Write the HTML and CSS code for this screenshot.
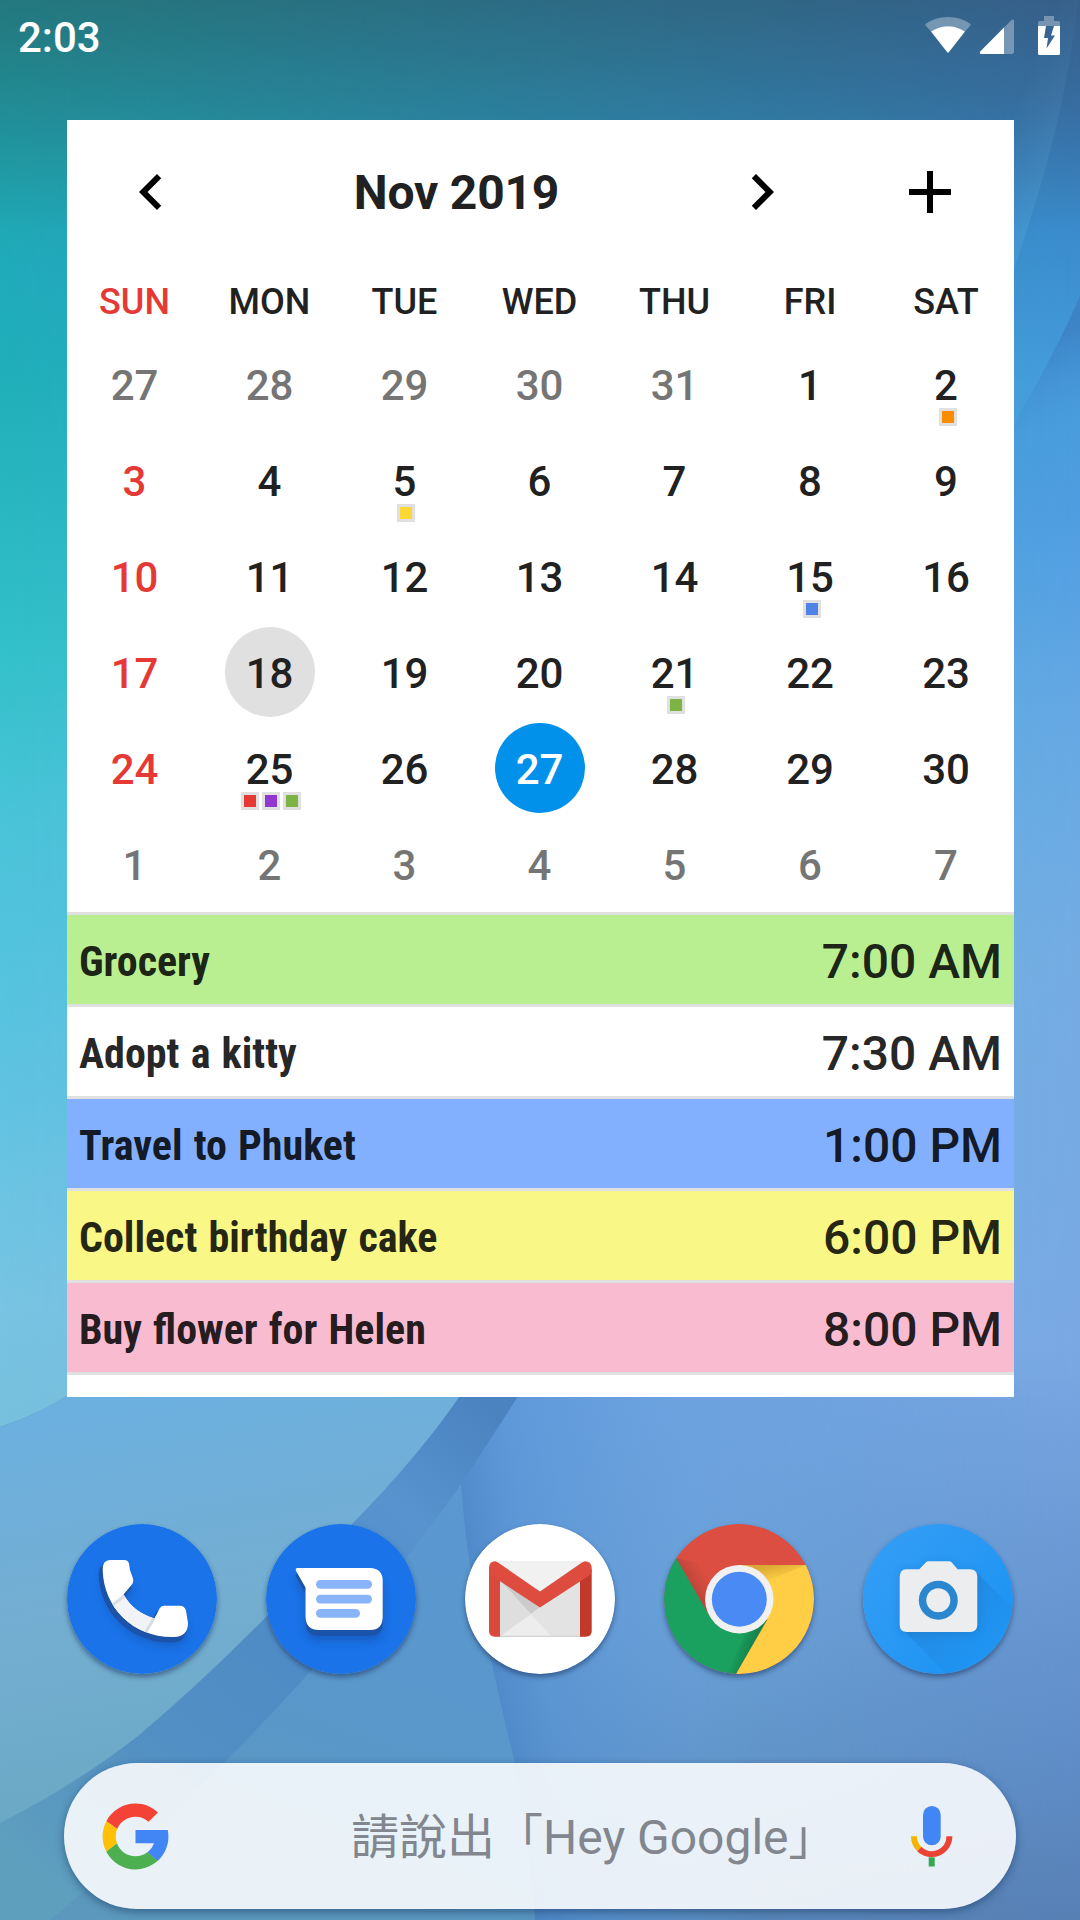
FILE: index.html
```html
<!DOCTYPE html>
<html lang="zh-Hant">
<head>
<meta charset="utf-8">
<title>Home screen</title>
<link rel="stylesheet" href="styles.css">
</head>
<body>
<div class="phone">
  <svg class="wallpaper" viewBox="0 0 1080 1920" preserveAspectRatio="none" aria-hidden="true">
    <defs>
      <linearGradient id="left" x1="0" y1="0" x2="0" y2="1">
        <stop offset="0" stop-color="#1f9a9c"/>
        <stop offset=".07" stop-color="#1fa2aa"/>
        <stop offset=".14" stop-color="#20abba"/>
        <stop offset=".2" stop-color="#21b0ba"/>
        <stop offset=".34" stop-color="#33c1ca"/>
        <stop offset=".43" stop-color="#4ac4d8"/>
        <stop offset=".53" stop-color="#58c3e0"/>
        <stop offset=".68" stop-color="#78c4e3"/>
        <stop offset=".75" stop-color="#76c0dc"/>
        <stop offset="1" stop-color="#5b9bc0"/>
      </linearGradient>
      <linearGradient id="right" x1="0" y1="0" x2="0" y2="1">
        <stop offset="0" stop-color="#3c73ae"/>
        <stop offset=".06" stop-color="#3a7ab8"/>
        <stop offset=".12" stop-color="#3a8bcb"/>
        <stop offset=".2" stop-color="#469cdb"/>
        <stop offset=".27" stop-color="#509de1"/>
        <stop offset=".37" stop-color="#65a8e4"/>
        <stop offset=".5" stop-color="#74ace2"/>
        <stop offset=".7" stop-color="#7aa8e3"/>
        <stop offset=".8" stop-color="#6c9ad5"/>
        <stop offset=".92" stop-color="#5f8cc6"/>
        <stop offset="1" stop-color="#5780b5"/>
      </linearGradient>
      <linearGradient id="fade" x1="0" y1="0" x2="1" y2="0">
        <stop offset="0" stop-color="#000"/>
        <stop offset="1" stop-color="#fff"/>
      </linearGradient>
      <mask id="across"><rect width="1080" height="1920" fill="url(#fade)"/></mask>
      <linearGradient id="base" gradientUnits="userSpaceOnUse" x1="700" y1="1390" x2="760" y2="1920">
        <stop offset="0" stop-color="#6ca3e0"/>
        <stop offset=".4" stop-color="#6ba1d8"/>
        <stop offset=".7" stop-color="#6297ca"/>
        <stop offset="1" stop-color="#5989ba"/>
      </linearGradient>
      <linearGradient id="baseEdge" gradientUnits="userSpaceOnUse" x1="700" y1="0" x2="1080" y2="0">
        <stop offset="0" stop-color="#fff" stop-opacity="0"/>
        <stop offset="1" stop-color="#fff"/>
      </linearGradient>
      <mask id="edgeMask" maskUnits="userSpaceOnUse" x="0" y="0" width="1080" height="1920"><rect x="700" y="1380" width="380" height="540" fill="url(#baseEdge)"/></mask>
      <linearGradient id="spine" gradientUnits="userSpaceOnUse" x1="455" y1="1500" x2="700" y2="1460">
        <stop offset="0" stop-color="#4580c2" stop-opacity=".75"/>
        <stop offset=".25" stop-color="#4f8dd2" stop-opacity=".5"/>
        <stop offset="1" stop-color="#5b97da" stop-opacity="0"/>
      </linearGradient>
      <linearGradient id="petal" gradientUnits="userSpaceOnUse" x1="120" y1="1397" x2="190" y2="1790">
        <stop offset="0" stop-color="#6cb0e0"/>
        <stop offset=".5" stop-color="#74aed2"/>
        <stop offset="1" stop-color="#6ba9c6"/>
      </linearGradient>
      <linearGradient id="fold" gradientUnits="userSpaceOnUse" x1="480" y1="1400" x2="60" y2="1900">
        <stop offset="0" stop-color="#4a83bf"/>
        <stop offset=".2" stop-color="#5893cf"/>
        <stop offset=".5" stop-color="#4f8cc5"/>
        <stop offset=".72" stop-color="#528fc3"/>
        <stop offset="1" stop-color="#5f9fbe"/>
      </linearGradient>
      <linearGradient id="inner" gradientUnits="userSpaceOnUse" x1="460" y1="1490" x2="300" y2="1920">
        <stop offset="0" stop-color="#5b97d2"/>
        <stop offset=".6" stop-color="#5997c9"/>
        <stop offset="1" stop-color="#5c98bd"/>
      </linearGradient>
      <linearGradient id="ridge" gradientUnits="userSpaceOnUse" x1="1035" y1="345" x2="1075" y2="430">
        <stop offset="0" stop-color="#3a78bb" stop-opacity=".6"/>
        <stop offset="1" stop-color="#4a93d8" stop-opacity="0"/>
      </linearGradient>
      <linearGradient id="glow" gradientUnits="userSpaceOnUse" x1="990" y1="180" x2="1046" y2="200">
        <stop offset="0" stop-color="#7cc0ee" stop-opacity="0"/>
        <stop offset="1" stop-color="#7cc0ee" stop-opacity=".18"/>
      </linearGradient>
      <linearGradient id="shade" x1="0" y1="0" x2="0" y2="1">
        <stop offset="0" stop-color="#2b3b48" stop-opacity=".36"/>
        <stop offset="1" stop-color="#2b3b48" stop-opacity="0"/>
      </linearGradient>
    </defs>
    <rect width="1080" height="1920" fill="url(#left)"/>
    <rect width="1080" height="1920" fill="url(#right)" mask="url(#across)"/>
    <path d="M990 0H1078Q1066 120 1014 268L980 400Z" fill="url(#glow)"/>
    <path d="M1080 296Q1050 365 1000 447V520H1080Z" fill="url(#ridge)"/>
    <path d="M440 1390H1020V1920H440Z" fill="url(#base)"/>
    <path d="M1014 1397H1080V1920H1014Z" fill="url(#base)"/>
    <rect width="1080" height="1920" fill="url(#right)" mask="url(#edgeMask)"/>
    <path d="M452 1390H760V1920H530Q500 1700 470 1570Q456 1480 452 1390Z" fill="url(#spine)"/>
    <path d="M0 1427Q45 1412 75 1390H522Q490 1440 461 1484Q466 1545 470 1565Q480 1625 492 1665Q504 1720 515 1763Q530 1840 535 1920H0Z" fill="url(#fold)"/>
    <path d="M461 1484Q466 1545 470 1565Q480 1625 492 1665Q504 1720 515 1763Q530 1840 535 1920H50Q170 1820 224 1763Q330 1655 405 1560Q440 1515 461 1484Z" fill="url(#inner)"/>
    <path d="M0 1427Q45 1412 75 1390H464Q420 1455 353 1523Q310 1575 266 1617Q200 1684 138 1736Q75 1785 0 1823Z" fill="url(#petal)"/>
    <rect width="1080" height="230" fill="url(#shade)"/>
  </svg>

  <header class="status">
    <span class="clock">2:03</span>
    <svg class="status-icons" width="136" height="40" viewBox="0 0 136 40" aria-hidden="true">
      <path d="M.4 8Q10 1 23 1T45.600 8Q46 9 45 10L40 15.500Q23 5 6 15.500L1 10Q0 9 .4 8Z" fill="#fff" opacity=".32"/>
      <path d="M6 15.500Q23 5 40 15.500L24 36Q23 37.400 22 36Z" fill="#fff"/>
      <path d="M78.500 12L86.500 4Q88.700 2.800 89 5V36.500L87.500 38H78.500Z" fill="#fff" opacity=".32"/>
      <path d="M79 11.500V38H55.500Q54 37 55.200 35.500Z" fill="#fff"/>
      <path d="M113 10V6.500Q113 5 114.500 5H119V0H129V5H133.500Q135 5 135 6.500V10Z" fill="#fff" opacity=".32"/>
      <path d="M113 10H121L119 22H123L121.500 32.500 130 19.500H126L129 10H135V37.500Q135 39 133.500 39H114.500Q113 39 113 37.500Z" fill="#fff"/>
    </svg>
  </header>

  <main class="widget">
    <div class="toolbar">
      <span class="tool tool-prev"><svg width="72" height="72" viewBox="0 0 24 24"><path d="M15.410 7.410 14 6l-6 6 6 6 1.410-1.410L10.830 12z"/></svg></span>
      <h1 class="month">Nov 2019</h1>
      <span class="tool"><svg width="72" height="72" viewBox="0 0 24 24"><path d="M10 6 8.590 7.410 13.170 12l-4.580 4.590L10 18l6-6z"/></svg></span>
      <span class="tool"><svg width="72" height="72" viewBox="0 0 24 24"><path d="M19 13h-6v6h-2v-6H5v-2h6V5h2v6h6v2z"/></svg></span>
    </div>
    <div class="weekdays">
      <span class="sun">SUN</span><span>MON</span><span>TUE</span><span>WED</span><span>THU</span><span>FRI</span><span>SAT</span>
    </div>
    <div class="days">
      <div class="day other">27</div><div class="day other">28</div><div class="day other">29</div><div class="day other">30</div><div class="day other">31</div><div class="day">1</div><div class="day">2<div class="dots"><i class="dot orange"></i></div></div>
      <div class="day sun">3</div><div class="day">4</div><div class="day">5<div class="dots"><i class="dot yellow"></i></div></div><div class="day">6</div><div class="day">7</div><div class="day">8</div><div class="day">9</div>
      <div class="day sun">10</div><div class="day">11</div><div class="day">12</div><div class="day">13</div><div class="day">14</div><div class="day">15<div class="dots"><i class="dot blue"></i></div></div><div class="day">16</div>
      <div class="day sun">17</div><div class="day"><span class="disc picked">18</span></div><div class="day">19</div><div class="day">20</div><div class="day">21<div class="dots"><i class="dot green"></i></div></div><div class="day">22</div><div class="day">23</div>
      <div class="day sun">24</div><div class="day">25<div class="dots"><i class="dot red"></i><i class="dot purple"></i><i class="dot green"></i></div></div><div class="day">26</div><div class="day"><span class="disc today">27</span></div><div class="day">28</div><div class="day">29</div><div class="day">30</div>
      <div class="day other">1</div><div class="day other">2</div><div class="day other">3</div><div class="day other">4</div><div class="day other">5</div><div class="day other">6</div><div class="day other">7</div>
    </div>
    <ul class="events">
      <li class="event lime"><span class="name">Grocery</span><span class="time">7:00 AM</span></li>
      <li class="event"><span class="name">Adopt a kitty</span><span class="time">7:30 AM</span></li>
      <li class="event sky"><span class="name">Travel to Phuket</span><span class="time">1:00 PM</span></li>
      <li class="event lemon"><span class="name">Collect birthday cake</span><span class="time">6:00 PM</span></li>
      <li class="event pink"><span class="name">Buy flower for Helen</span><span class="time">8:00 PM</span></li>
    </ul>
  </main>

  <nav class="dock">
    <svg class="app" viewBox="0 0 150 150" role="img" aria-label="Phone">
      <defs>
        <path id="handset" d="M43 36H57.500Q61 36 62 39.500L63 46 66 54.500Q67 58 64.500 61L56.500 70.500C64 83 73 90 87.500 94.500L92.500 84.500Q94 81.700 97 81.700H113Q117.500 81.700 119 86.500L121 99Q121 112.500 107 113C67 114 36.500 84 35.700 46Q35.500 36 43 36Z"/>
        <clipPath id="handsetClip"><use href="#handset"/></clipPath>
        <filter id="soft" x="-30%" y="-30%" width="160%" height="160%"><feGaussianBlur stdDeviation="4"/></filter>
      </defs>
      <circle cx="75" cy="75" r="75" fill="#1a73e8"/>
      <use href="#handset" x="-1" y="9" fill="#174ea6" opacity=".5" filter="url(#soft)"/>
      <use href="#handset" x="-4" y="4.500" fill="#1b53a8"/>
      <use href="#handset" x="-2" y="5.500" fill="#1b53a8"/>
      <use href="#handset" fill="#fff"/>
      <g clip-path="url(#handsetClip)">
        <path d="M44 81.500 57.500 71 90 92 78 110H60Z" fill="#f1f3f6"/>
        <path d="M44 82 58 71.500M78.500 108.500 87.500 93.500" stroke="#dadce3" stroke-width="3"/>
      </g>
    </svg>
    <svg class="app" viewBox="0 0 150 150" role="img" aria-label="Messages">
      <defs><path id="bubble" d="M31 44H104Q116.700 44.500 116.700 57V93Q116.500 106 104 106H53Q40 106 39.500 93V63.500L29.800 46.500Q29.300 44.300 31 44Z"/></defs>
      <circle cx="75" cy="75" r="75" fill="#1a73e8"/>
      <use href="#bubble" y="10" fill="#174ea6" opacity=".6" filter="url(#soft)"/>
      <use href="#bubble" y="5.800" fill="#1b53a8"/>
      <use href="#bubble" fill="#fff"/>
      <g fill="#8ab4f8"><rect x="50" y="56" width="56" height="8.700" rx="4.350"/><rect x="50" y="70.700" width="56" height="8.700" rx="4.350"/><rect x="50" y="85" width="44" height="8.700" rx="4.350"/></g>
    </svg>
    <svg class="app" viewBox="0 0 150 150" role="img" aria-label="Gmail">
      <circle cx="75" cy="75" r="75" fill="#fff"/>
      <path d="M30 37.300H120V112.700H30Z" fill="#e2e2e2"/>
      <path d="M30 37.300H120L75 68Z" fill="#f1f1f1"/>
      <path d="M35 56 66 90 35 112.700Z" fill="#dedede"/>
      <path d="M35 56 75 83 66 90Z" fill="#cbcbcb"/>
      <path d="M66 90 35 112.700H87Z" fill="#ededed"/>
      <path d="M115 56 75 83 66 90 87 112.700H115Z" fill="#e3e3e3"/>
      <path d="M35 111.700H115V113H35Z" fill="#d2d2d2"/>
      <path d="M24 45V107Q24 112.700 30 112.700H35V50Z" fill="#d9493d"/>
      <path d="M126.700 45V107Q126.700 112.700 121 112.700H115V50Z" fill="#c0392b"/>
      <path d="M24 43.500Q24.500 37.300 30 37.300L33 38.500 75 67.500 117 38.500 120 37.300Q126 37.300 126.700 43.500V48Q126.500 50 125 51L75 83.500 25.500 51Q24 50 24 48Z" fill="#de4c3f"/>
    </svg>
    <svg class="app" viewBox="0 0 150 150" role="img" aria-label="Chrome">
      <defs>
        <clipPath id="round"><circle cx="75" cy="75" r="75"/></clipPath>
        <linearGradient id="redFold" gradientUnits="userSpaceOnUse" x1="26" y1="66" x2="44" y2="55"><stop offset="0" stop-color="#6d2a25" stop-opacity=".3"/><stop offset="1" stop-color="#6d2a25" stop-opacity="0"/></linearGradient>
        <linearGradient id="yellowFold" gradientUnits="userSpaceOnUse" x1="110" y1="40" x2="114" y2="56"><stop offset="0" stop-color="#8a5a10" stop-opacity=".32"/><stop offset="1" stop-color="#8a5a10" stop-opacity="0"/></linearGradient>
        <linearGradient id="greenFold" gradientUnits="userSpaceOnUse" x1="90" y1="122" x2="74" y2="116"><stop offset="0" stop-color="#0c4b2c" stop-opacity=".38"/><stop offset="1" stop-color="#0c4b2c" stop-opacity="0"/></linearGradient>
      </defs>
      <g clip-path="url(#round)">
        <rect width="150" height="150" fill="#db4e41"/>
        <path d="M12.300 34.300 45 91 75 96 102.700 96.700 72 150H0V30Z" fill="#1aa15f"/>
        <path d="M75 41H150V150H72L102.700 96Z" fill="#ffce44"/>
        <path d="M12.300 34.300 45 91 60 44Z" fill="url(#redFold)"/>
        <path d="M75 41H142L96 60Z" fill="url(#yellowFold)"/>
        <path d="M104 95 72 150 62 150 84 104Z" fill="url(#greenFold)"/>
      </g>
      <circle cx="75.300" cy="75.200" r="34.200" fill="#f1f1f1"/>
      <circle cx="75.300" cy="75.200" r="27.500" fill="#4a8af4"/>
    </svg>
    <svg class="app" viewBox="0 0 150 150" role="img" aria-label="Camera">
      <defs>
        <linearGradient id="cam" x1=".1" y1=".1" x2=".8" y2=".7"><stop offset="0" stop-color="#339df5"/><stop offset="1" stop-color="#2095f3"/></linearGradient>
        <linearGradient id="camShade" gradientUnits="userSpaceOnUse" x1="70" y1="70" x2="125" y2="125"><stop offset="0" stop-color="#1565b5" stop-opacity=".28"/><stop offset="1" stop-color="#1565b5" stop-opacity=".02"/></linearGradient>
        <path id="camera" d="M43 45.300H56.300L63 38.300Q64 37.300 65.500 37.300H86Q87.500 37.300 88.500 38.300L94.700 45.300H107Q114.300 45.500 114.300 52.500V101Q114 108 107 108H43.500Q36.700 107.700 36.700 101V52.500Q37 45.500 43 45.300Z"/>
      </defs>
      <circle cx="75" cy="75" r="75" fill="url(#cam)"/>
      <path d="M112 47 150 84V150H83L40 106Z" fill="url(#camShade)" clip-path="url(#round)"/>
      <use href="#camera" y="1.500" fill="#14589c" opacity=".28" filter="url(#soft)"/>
      <use href="#camera" fill="#ecedef"/>
      <circle cx="75.300" cy="76.300" r="19.500" fill="#2b86d0"/>
      <circle cx="75.300" cy="76.300" r="12" fill="#ecedef"/>
    </svg>
  </nav>

  <div class="search">
    <svg width="79" height="79" viewBox="0 0 48 48" role="img" aria-label="Google">
      <path fill="#4285f4" d="M43.611 20.083H24v8h11.303a12.040 12.040 0 0 1-4.087 5.571l6.190 5.238C36.971 39.205 44 34 44 24c0-1.341-.138-2.650-.389-3.917z"/>
      <path fill="#f44336" d="m6.306 14.691 6.571 4.819C14.655 15.108 18.961 12 24 12c3.059 0 5.842 1.154 7.961 3.039l5.657-5.657C34.046 6.053 29.268 4 24 4 16.318 4 9.656 8.337 6.306 14.691z"/>
      <path fill="#4caf50" d="M24 44c5.166 0 9.860-1.977 13.409-5.192l-6.190-5.238A11.910 11.910 0 0 1 24 36c-5.202 0-9.619-3.317-11.283-7.946l-6.522 5.025C9.505 39.556 16.227 44 24 44z"/>
      <path fill="#ffc107" d="M6.306 14.691A19.900 19.900 0 0 0 4 24c0 3.260.790 6.340 2.195 9.079l6.522-5.025A11.900 11.900 0 0 1 12.877 19.510z"/>
    </svg>
    <span class="hint">請說出「Hey Google」</span>
    <svg class="mic" width="42" height="61" viewBox="0 0 42 61" role="img" aria-label="Voice search">
      <rect x="12" width="17.700" height="39.300" rx="8.850" fill="#4285f4"/>
      <g fill="none" stroke-width="6"><path d="M3 30.300A17.700 17.700 0 0 0 8.300 43" stroke="#f4b400"/><path d="M8.300 43A17.700 17.700 0 0 0 38.400 30.300" stroke="#ea4335"/></g>
      <path d="M17.700 51.300H23.700V60.500H17.700Z" fill="#34a853"/>
    </svg>
  </div>
</div>
</body>
</html>
```
FILE: styles.css
```css
* {
  box-sizing: border-box;
}

body {
  margin: 0;
  font-family: Roboto, "Noto Sans CJK TC", sans-serif;
  color: #212121;
}

.phone {
  position: relative;
  display: flex;
  flex-direction: column;
  width: 1080px;
  height: 1920px;
  overflow: hidden;
}

.wallpaper {
  position: absolute;
  inset: 0;
  z-index: -1;
  width: 1080px;
  height: 1920px;
}

.status {
  display: flex;
  justify-content: space-between;
  align-items: flex-start;
  height: 120px;
  padding: 16px 19px 0 18px;
  color: #fff;
}

.clock {
  font-size: 42px;
  font-weight: 500;
  line-height: 44px;
}

.widget {
  display: flex;
  flex-direction: column;
  width: 947px;
  height: 1277px;
  margin-left: 67px;
  background: #fff;
}

.toolbar {
  display: flex;
  align-items: center;
  height: 144px;
}

.tool {
  display: flex;
  justify-content: center;
  width: 168px;
}

.month {
  flex: 1;
  margin: 0;
  padding-top: 2px;
  font-size: 48px;
  font-weight: 700;
  line-height: 60px;
  letter-spacing: -.2px;
  text-align: center;
}

.weekdays,
.days {
  display: grid;
  grid-template-columns: repeat(5, 135px) repeat(2, 136px);
  text-align: center;
}

.weekdays {
  height: 72px;
  padding-top: 2px;
  font-size: 36px;
  font-weight: 500;
  line-height: 72px;
}

.days {
  grid-auto-rows: 96px;
  font-size: 42px;
  font-weight: 500;
}

.day {
  position: relative;
  line-height: 100px;
}

.sun {
  color: #e53935;
}

.other {
  color: #757575;
}

.disc {
  display: block;
  width: 90px;
  height: 90px;
  margin: 3px auto 0;
  border-radius: 50%;
  line-height: 94px;
}

.picked {
  background: #e0e0e0;
}

.today {
  background: #0291ea;
  color: #fff;
}

.dots {
  position: absolute;
  right: 0;
  bottom: 6px;
  left: 0;
  display: flex;
  justify-content: center;
  gap: 3px;
  padding-left: 3px;
}

.dot {
  width: 18px;
  height: 18px;
  border: 3px solid #e0e0e0;
}

.orange { background: #fb8c00; }
.yellow { background: #fdd835; }
.blue { background: #4f81e6; }
.green { background: #7cb342; }
.red { background: #e53935; }
.purple { background: #9038cf; }

.events {
  margin: 0;
  padding: 0;
  border-top: 3px solid #e0e0e0;
  list-style: none;
}

.event {
  display: flex;
  justify-content: space-between;
  align-items: center;
  height: 92px;
  padding: 3px 12px 0;
  border-bottom: 3px solid #e0e0e0;
  color: rgba(0, 0, 0, .87);
}

.lime { background: #b9ee91; }
.sky { background: #82b0ff; }
.lemon { background: #f9f785; }
.pink { background: #f8bbd0; }

.name {
  font-family: "Roboto Condensed", Roboto, sans-serif;
  font-size: 42px;
  font-weight: 700;
  font-stretch: condensed;
  word-spacing: 1.5px;
}

.time {
  font-size: 48px;
  font-weight: 500;
}

.dock {
  display: flex;
  gap: 49px;
  margin: 127px 0 0 67px;
}

.app {
  width: 150px;
  height: 150px;
  border-radius: 50%;
  box-shadow: 0 3px 5px rgba(20, 40, 80, .5);
}

.search {
  display: flex;
  align-items: center;
  width: 952px;
  height: 146px;
  margin: 89px 0 0 64px;
  padding: 0 63px 0 32px;
  border-radius: 73px;
  background: rgba(255, 255, 255, .87);
  box-shadow: 0 3px 8px rgba(20, 50, 90, .5);
}

.hint {
  flex: 1;
  padding: 3px 0 0 176px;
  font-size: 48px;
  line-height: 60px;
  white-space: nowrap;
  color: #82868e;
}
```
